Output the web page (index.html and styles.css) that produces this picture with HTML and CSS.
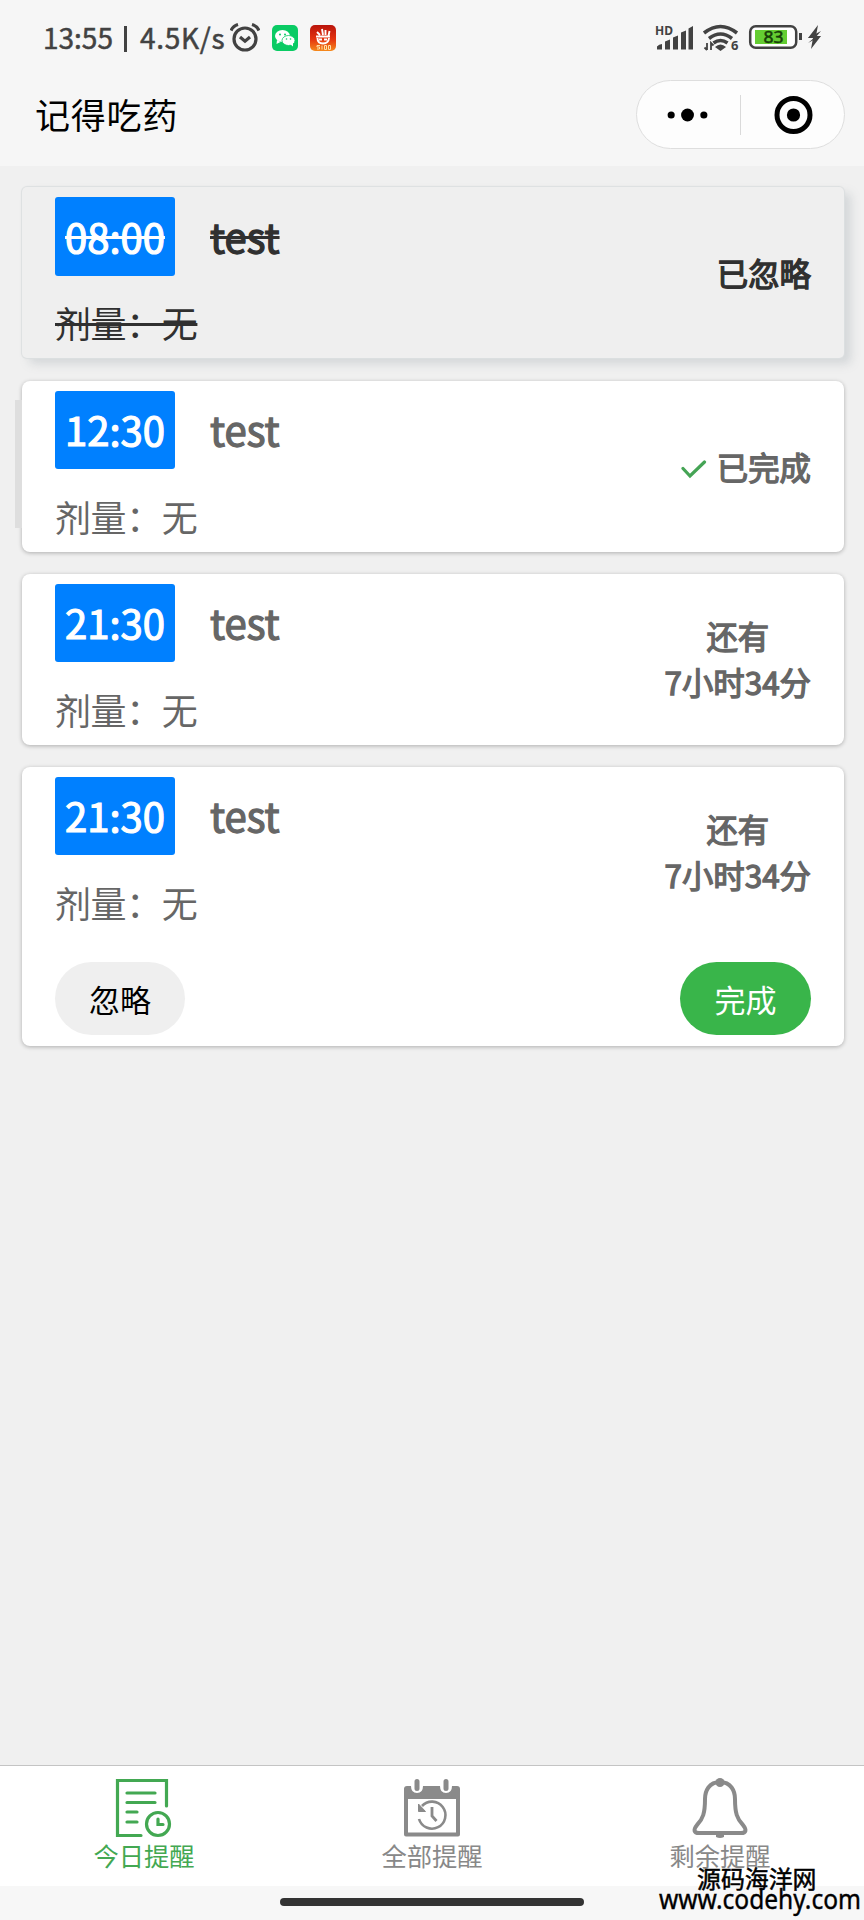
FILE: index.html
```
<!DOCTYPE html>
<html lang="zh-CN">
<head>
<meta charset="utf-8">
<title>记得吃药</title>
<link rel="stylesheet" href="styles.css">
</head>
<body>
<div class="screen">
  <header class="top">
    <div class="status">
      <span class="clock">13:55</span><span class="bar"></span><span class="speed">4.5K/s</span>
      <svg class="alarm" width="30" height="30" viewBox="0 0 30 30" fill="none" stroke="#424242" stroke-width="3.2"><circle cx="15" cy="16" r="11"/><path d="M10 14l5 4.2 5-4.2M1 7.500Q3 3 8 1.500M29 7.500Q27 3 22 1.500"/></svg>
      <svg class="wechat" width="26" height="26" viewBox="0 0 26 26"><rect width="26" height="26" rx="5" fill="#0acb64"/><ellipse cx="10.500" cy="11" rx="7.500" ry="6" fill="#fff"/><path d="M5 15l-.5 4 4-2z" fill="#fff"/><ellipse cx="16.500" cy="15.500" rx="6.500" ry="5" fill="#fff" stroke="#0acb64" stroke-width=".8"/><path d="M18 19l3 2.500v-4z" fill="#fff"/><g fill="#0acb64"><circle cx="8" cy="9.500" r="1"/><circle cx="13" cy="9.500" r="1"/><circle cx="14.500" cy="14" r=".8"/><circle cx="18.500" cy="14" r=".8"/></g></svg>
      <svg class="app" width="26" height="26" viewBox="0 0 26 26"><defs><linearGradient id="warm" x1="0" y1="0" x2="0" y2="1"><stop offset="0" stop-color="#b9140c"/><stop offset=".55" stop-color="#e5340f"/><stop offset="1" stop-color="#f58a1c"/></linearGradient></defs><rect width="26" height="26" rx="5" fill="url(#warm)"/><g fill="none" stroke="#fff" stroke-width="1.900"><path d="M6 11.500h14M12 4l1 6M15.500 5v5M19.500 6l-1 5M7 7l3 3M7.500 13q0 5.500 5.500 5.500t6-5.500M9 14.500h3M14 14.500h3"/></g><path d="M10 20.500H7v1.500h2.500v2H7M12 20.500v4M14.500 20.500h2v4h-2zM18.500 20.500h2v4h-2z" fill="none" stroke="#ffe0a8"/></svg>
      <svg class="signals" width="172" height="30" viewBox="0 0 172 30">
        <text class="hd" x="0" y="11" textLength="18" lengthAdjust="spacingAndGlyphs">HD</text>
        <g fill="#424242"><path d="M2 25.500v-3q2-2.500 5-2.500v5.500zM10 25.500v-8l5-2v10zM18 25.500v-12l5-2v14zM26 25.500v-17l5-2v19zM33.500 25.500v-21l4.500-2.500v23.500z"/><path d="M60 23q5.500-5 11 0l-5.500 4z"/></g>
        <g fill="none" stroke="#424242" stroke-width="3.600"><path d="M49 9q16.500-13 33 0M54 14.500q11.500-9 23 0M58.500 19q7-5 14 0"/></g>
        <path d="M52 19v7M49.500 23.500l2.500 2.500M56 26v-7l2.500 2.500" fill="none" stroke="#424242" stroke-width="1.800"/>
        <text class="six" x="76" y="26">6</text>
        <rect x="95.200" y="2.200" width="46" height="21.600" rx="5.500" fill="#fff" stroke="#424242" stroke-width="2.500"/>
        <rect x="100" y="6" width="32" height="14" fill="#64cd32"/>
        <text class="charge" x="108.500" y="19" textLength="20" lengthAdjust="spacingAndGlyphs">83</text>
        <path d="M144 9h3v7h-3zM163 1l-10 13h5l-2 11 10-13h-5z" fill="#424242"/><path d="M153 14l13-7-5 6 5-1-13 7 6-5z" fill="#424242"/>
      </svg>
    </div>
    <div class="nav">
      <h1 class="title">记得吃药</h1>
      <div class="capsule">
        <svg class="more" width="104" height="40" viewBox="0 0 104 40"><circle cx="34.500" cy="20" r="3.600"/><circle cx="51" cy="20" r="6.500"/><circle cx="67.500" cy="20" r="3.600"/></svg>
        <svg class="close" width="103" height="40" viewBox="0 0 103 40"><circle cx="52.500" cy="20" r="16.500" fill="none" stroke="#000" stroke-width="5"/><circle cx="52.500" cy="20" r="6.600"/></svg>
      </div>
    </div>
  </header>

  <main class="list">
    <section class="card ignored">
      <div class="info"><div class="line"><span class="time">08:00</span><span class="name">test</span></div><div class="dose">剂量：无</div></div>
      <div class="state">已忽略</div>
    </section>
    <section class="card done">
      <div class="info"><div class="line"><span class="time">12:30</span><span class="name">test</span></div><div class="dose">剂量：无</div></div>
      <div class="state"><svg class="tick" width="26" height="20" viewBox="0 0 26 20"><path d="M2 9.500l7 7.500L23.500 3" fill="none" stroke="#45a455" stroke-width="3.200" stroke-linecap="round"/></svg>已完成</div>
    </section>
    <section class="card">
      <div class="info"><div class="line"><span class="time">21:30</span><span class="name">test</span></div><div class="dose">剂量：无</div></div>
      <div class="state">还有<br>7小时34分</div>
    </section>
    <section class="card open">
      <div class="info"><div class="line"><span class="time">21:30</span><span class="name">test</span></div><div class="dose">剂量：无</div></div>
      <div class="state">还有<br>7小时34分</div>
      <div class="actions"><button class="btn">忽略</button><button class="btn primary">完成</button></div>
    </section>
  </main>

  <nav class="tabs">
    <a class="tab active">
      <svg width="60" height="62" viewBox="0 0 60 62" fill="none" stroke="#43a852" stroke-width="3.200" stroke-linecap="round"><path d="M52.500 29V3.500H3.500V58.500H27" /><path d="M13 16h28M13 25.500h28M13 35h10M13 45h10"/><circle cx="44" cy="47" r="11.500"/><path d="M44 42v5.500h5"/></svg>
      <span>今日提醒</span>
    </a>
    <a class="tab">
      <svg width="60" height="62" viewBox="0 0 60 62" fill="none" stroke="#8a8a8a"><path d="M4 21V57.500H56V21" stroke-width="4" stroke-linejoin="round"/><path d="M2 22V12q0-3 3-3H9q0 7 6 7t6-7H38q0 7 6 7t6-7h5q3 0 3 3V22z" fill="#8a8a8a" stroke="none"/><path d="M15 4.500v7M44 4.500v7" stroke-width="5" stroke-linecap="round"/><path d="M20 29a13.500 13.500 0 1 1-3 13" stroke-width="2.600"/><path d="M16.500 27v7.500h7z" fill="#8a8a8a" stroke-width="1"/><path d="M30 30v9l4.500 5" stroke-width="2.800"/></svg>
      <span>全部提醒</span>
    </a>
    <a class="tab">
      <svg width="60" height="62" viewBox="0 0 60 62" fill="none" stroke="#8a8a8a"><path d="M30 5C19 5 15 14 15 22C15 36 13 42 7 48C3 53 4 56 9 56H51C56 56 57 53 53 48C47 42 45 36 45 22C45 14 41 5 30 5Z" stroke-width="4"/><circle cx="30" cy="5.500" r="4.500" fill="#8a8a8a" stroke="none"/><path d="M26 56h8v4q-4 2-8 0z" fill="#8a8a8a" stroke="none"/></svg>
      <span>剩余提醒</span>
    </a>
  </nav>
  <footer class="home"><i class="handle"></i></footer>
  <div class="watermark"><b class="site">源码海洋网</b><svg class="link" width="204" height="34" viewBox="0 0 204 34"><text class="url" x="0" y="23" textLength="202" lengthAdjust="spacingAndGlyphs">www.codehy.com</text></svg></div>
</div>
</body>
</html>
```
FILE: styles.css
```
* { box-sizing: border-box; }
body { margin: 0; font-family: "Noto Sans CJK SC", sans-serif; }
.screen { position: relative; width: 864px; height: 1920px; display: flex; flex-direction: column; background: #f0f0f0; overflow: hidden; }
.top { height: 166px; background: #f6f6f6; }
.status { height: 80px; padding: 17px 42px 0 43px; display: flex; align-items: flex-start; color: #424242; font-size: 28px; line-height: 40px; -webkit-text-stroke: .5px #424242; }
.clock { width: 81px; }
.bar { width: 3px; height: 26px; margin: 9px 13px 0 0; background: #424242; }
.speed { width: 90px; letter-spacing: .7px; }
.alarm { margin-top: 6px; }
.wechat { margin: 8px 0 0 12px; }
.app { margin: 8px 0 0 12px; }
.signals { margin: 7px -5px 0 auto; -webkit-text-stroke: 0; overflow: visible; }
.hd { font: bold 12px "Noto Sans", sans-serif; fill: #424242; }
.six { font: bold 13px "Noto Sans", sans-serif; fill: #424242; }
.charge { font: 16px "Noto Sans", sans-serif; fill: #163c08; stroke: #163c08; stroke-width: .5px; }
.nav { display: flex; justify-content: space-between; padding: 0 19px 0 35px; }
.title { margin: 0; font-size: 35px; font-weight: 400; line-height: 67px; color: #000; letter-spacing: .8px; }
.capsule { width: 209px; height: 69px; display: flex; align-items: center; background: #fdfdfd; border: 1px solid #dedede; border-radius: 35px; }
.more { border-right: 1px solid #dadada; }

.list { flex: 1; padding: 21px 20px 0 22px; display: flex; flex-direction: column; gap: 22px; }
.card { position: relative; height: 171px; padding: 10px 33px 0; display: flex; flex-wrap: wrap; justify-content: space-between; align-content: flex-start; background: #fff; border-radius: 8px; color: #666; box-shadow: 0 1px 4px rgba(0, 0, 0, .28); }
.open { height: 279px; }
.ignored { margin-bottom: 1px; background: #efefef; color: #303030; border-radius: 5px; box-shadow: 0 0 1px 1px #dcdfe0, 7px 6px 10px rgba(130, 145, 150, .25); }
.done::before { content: ""; position: absolute; left: -7px; top: 19px; width: 7px; height: 128px; background: #dedede; }
.line { display: flex; height: 78px; }
.time { width: 120px; height: 78px; border-radius: 3px; background: #0080ff; color: #fff; font-size: 40px; line-height: 76px; text-align: center; -webkit-text-stroke: 1.200px #fff; }
.name { margin-left: 35px; font-size: 40px; line-height: 76px; -webkit-text-stroke: 1.300px currentColor; }
.dose { margin-top: 20px; font-size: 36px; line-height: 54px; letter-spacing: -.4px; }
.ignored .time { height: 79px; }
.ignored .time, .ignored .name { line-height: 78px; }
.ignored .time, .ignored .name, .ignored .dose { text-decoration: line-through; text-decoration-thickness: 3px; }
.state { height: 152px; display: flex; align-items: center; text-align: center; font-size: 31.400px; line-height: 46px; -webkit-text-stroke: 1.300px currentColor; }
.done .state { height: 151px; }
.card:not(.ignored):not(.done) .state { display: block; padding-top: 29px; }
.tick { margin: 4px 10px 0 0; }
.actions { width: 100%; display: flex; justify-content: space-between; margin-top: 33px; }
.btn { width: 130px; height: 73px; padding: 0; border: 0; border-radius: 37px; background: #efefef; color: #000; font: 31px/71px "Noto Sans CJK SC", sans-serif; }
.primary { width: 131px; background: #39b54a; color: #fff; }

.tabs { height: 121px; display: flex; background: #fff; border-top: 1px solid #c4c4c4; }
.tab { flex: 1; display: flex; flex-direction: column; align-items: center; padding-top: 11px; color: #888; font-size: 25.300px; line-height: 32px; }
.active { color: #43a852; }
.home { height: 34px; background: #f7f7f7; display: flex; justify-content: center; padding-top: 12px; }
.handle { width: 304px; height: 8px; border-radius: 4px; background: #333; }
.watermark { position: absolute; right: 1px; bottom: 0; width: 204px; height: 54px; display: flex; flex-direction: column; color: #000; }
.site { margin-left: 38px; font-size: 23.900px; line-height: 23px; font-weight: 400; -webkit-text-stroke: .5px #000; height: 20px; white-space: nowrap; }
.link { flex-shrink: 0; overflow: visible; }
.url { font: 27px "Noto Sans", sans-serif; stroke: #000; stroke-width: .4px; }
```
